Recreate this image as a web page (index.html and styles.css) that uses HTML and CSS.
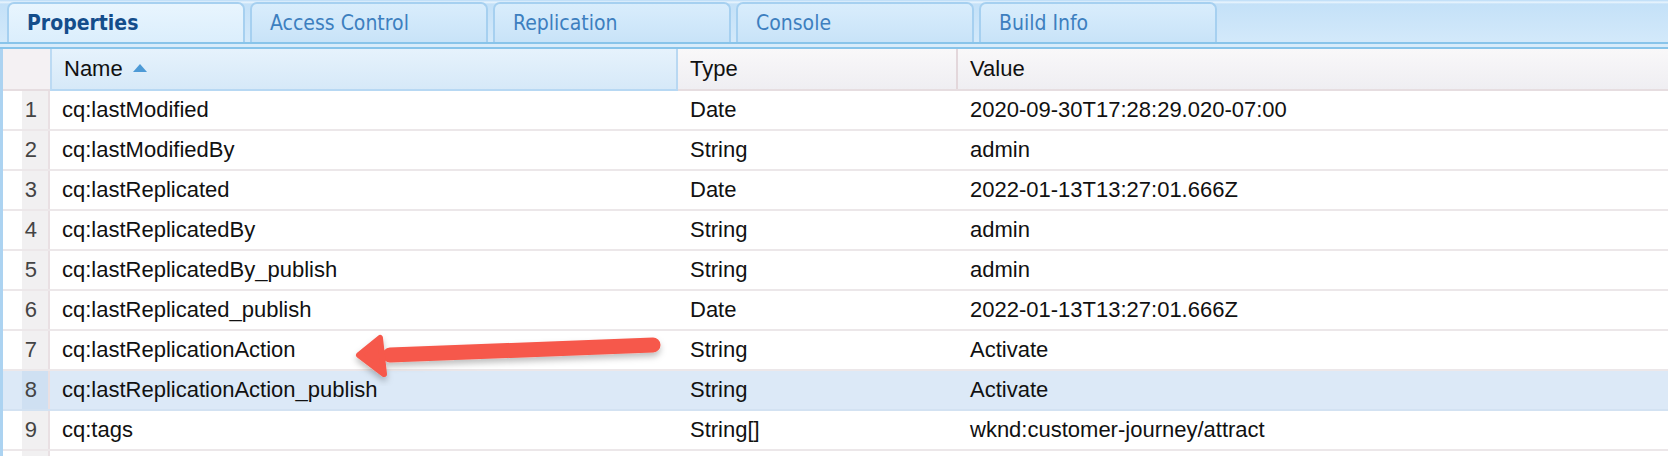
FILE: index.html
```html
<!DOCTYPE html>
<html lang="en">
<head>
    <meta charset="UTF-8">
    <title>CRXDE Properties</title>
    <link rel="stylesheet" href="styles.css">
</head>
<body>
    <div class="tabbar">
        <div class="tab active">Properties</div>
        <div class="tab">Access Control</div>
        <div class="tab">Replication</div>
        <div class="tab">Console</div>
        <div class="tab">Build Info</div>
    </div>
    <div class="tabline"></div>

    <div class="grid">
        <div class="row head">
            <div class="num"></div>
            <div class="cell sorted">Name <span class="sort"></span></div>
            <div class="cell">Type</div>
            <div class="cell">Value</div>
        </div>
        <div class="row"><div class="num">1</div><div class="cell">cq:lastModified</div><div class="cell">Date</div><div class="cell">2020-09-30T17:28:29.020-07:00</div></div>
        <div class="row"><div class="num">2</div><div class="cell">cq:lastModifiedBy</div><div class="cell">String</div><div class="cell">admin</div></div>
        <div class="row"><div class="num">3</div><div class="cell">cq:lastReplicated</div><div class="cell">Date</div><div class="cell">2022-01-13T13:27:01.666Z</div></div>
        <div class="row"><div class="num">4</div><div class="cell">cq:lastReplicatedBy</div><div class="cell">String</div><div class="cell">admin</div></div>
        <div class="row"><div class="num">5</div><div class="cell">cq:lastReplicatedBy_publish</div><div class="cell">String</div><div class="cell">admin</div></div>
        <div class="row"><div class="num">6</div><div class="cell">cq:lastReplicated_publish</div><div class="cell">Date</div><div class="cell">2022-01-13T13:27:01.666Z</div></div>
        <div class="row"><div class="num">7</div><div class="cell">cq:lastReplicationAction</div><div class="cell">String</div><div class="cell">Activate</div></div>
        <div class="row selected"><div class="num">8</div><div class="cell">cq:lastReplicationAction_publish</div><div class="cell">String</div><div class="cell">Activate</div></div>
        <div class="row"><div class="num">9</div><div class="cell">cq:tags</div><div class="cell">String[]</div><div class="cell">wknd:customer-journey/attract</div></div>
        <div class="row last"><div class="num"></div><div class="cell"></div><div class="cell"></div><div class="cell"></div></div>
    </div>

    <!-- strelica preko tablice -->
    <svg class="arrow" width="320" height="60" viewBox="0 0 320 60">
        <defs>
            <filter id="sjena" x="-10%" y="-50%" width="120%" height="200%">
                <feDropShadow dx="0" dy="4" stdDeviation="3" flood-color="#000" flood-opacity="0.25"/>
            </filter>
        </defs>
        <g filter="url(#sjena)" fill="#f6594b" stroke="#f6594b" stroke-linecap="round" stroke-linejoin="round">
            <line x1="303" y1="19" x2="40" y2="29" stroke-width="15"/>
            <polygon points="9,29 30,12 34,48" stroke-width="6"/>
        </g>
    </svg>
</body>
</html>
```

FILE: styles.css
```css
body {margin: 0; width: 1668px; height: 456px; overflow: hidden; position: relative;
    background-color: white;
    font-family: "Liberation Sans", Arial, Helvetica, sans-serif;
}

.tabbar {display: flex; align-items: flex-end; gap: 5px; height: 42px; padding-left: 7px;
    background: linear-gradient(#c3e0f8 0px, #c3e0f8 1px, #eef7fe 2px, #c4e1f8 4px, #d3e9fa 100%);
    border-bottom: 2px solid #88c4ea;
}
.tab {width: 216px; height: 38px; padding-left: 18px;
    border: 2px solid #a6d0f0; border-bottom: none; border-radius: 7px 7px 0 0;
    background: linear-gradient(#d9edfc, #c8e3f8);
    font-family: "DejaVu Sans Condensed", "DejaVu Sans", sans-serif; font-stretch: condensed;
    font-size: 21px; line-height: 38px; color: #3d7fbf;
}
.tab.active {background: linear-gradient(#e8f5fe, #dbeefc); color: #144d8b; font-weight: bold;}

.tabline {height: 3px; background-color: #d9ecfa; border-bottom: 2px solid #88c4ea;}

.grid {border-left: 3px solid #acd3f1; font-size: 22px; color: #111;}
.row {display: grid; grid-template-columns: 47px 628px 280px 1fr; height: 40px;
    box-sizing: border-box; border-bottom: 2px solid #ece7e9;}
.row.last {height: 10px;}
.row .num {background: linear-gradient(to right, #ffffff 19px, #f1f0f1 19px);
    border-right: 2px solid #e9e0e3; color: #444; text-align: right; padding-right: 11px;
    line-height: 38px;}
.cell {padding-left: 12px; line-height: 38px; white-space: nowrap; overflow: hidden;
    border-right: 2px solid #fff;}
.row.head {height: 42px; border-bottom: 2px solid #e6dde0;
    background: linear-gradient(#f9f8f9, #efeef2);}
.row.head .num {background: #f4f1f3; border-right: none;}
.row.head .cell {border-right: 2px solid #e3d7db; line-height: 40px;}
.row.head .cell:last-child {border-right: none;}
.row.head .cell.sorted {background: linear-gradient(#e6f2fc, #d6e9f8); border-left: 2px solid #bcdaf3;
    border-right: 2px solid #b9d8f2; margin-bottom: -2px; border-bottom: 2px solid #b7d8f3;}
.sort {display: inline-block; width: 0; height: 0; margin-left: 4px; vertical-align: 4px;
    border-left: 7px solid transparent; border-right: 7px solid transparent; border-bottom: 8px solid #4d9ad6;}

.row.selected {background-color: #dce9f7; border-bottom-color: #d3e2f2;}
.row.selected .num {background: linear-gradient(to right, #dce9f7 19px, #cfe0f2 19px);}
.row.selected .cell {border-right-color: #dce9f7;}

.arrow {position: absolute; left: 350px; top: 326px;}
```
